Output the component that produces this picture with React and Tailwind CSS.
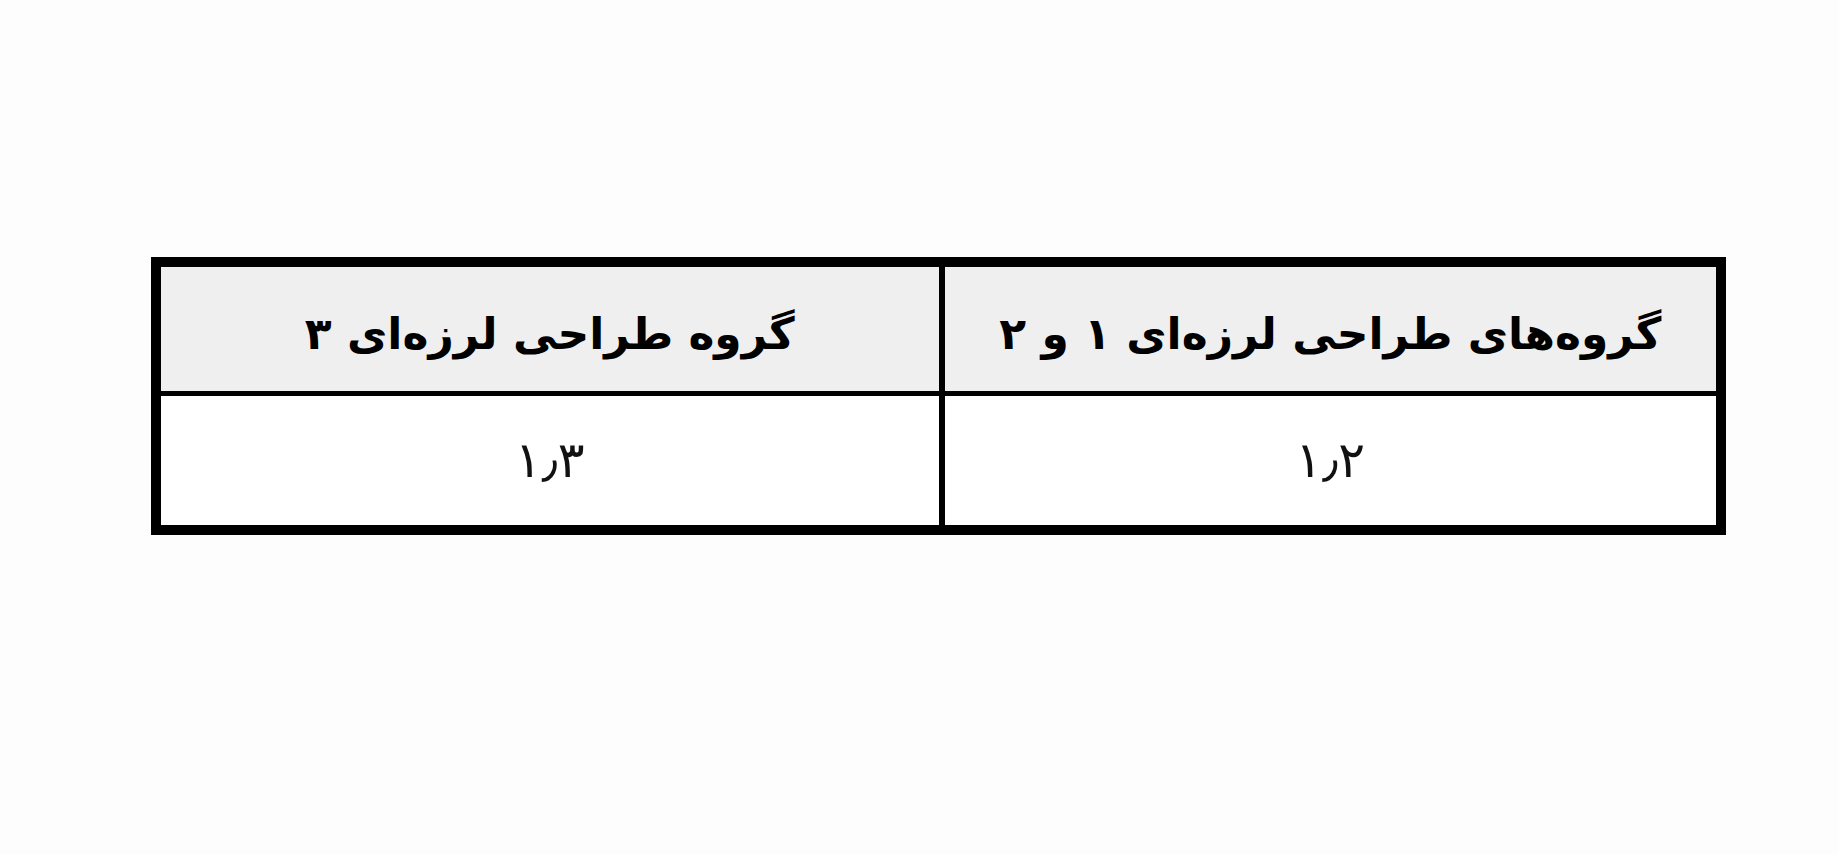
export default function App() {
  const headers = ['گروه‌های طراحی لرزه‌ای ۱ و ۲', 'گروه طراحی لرزه‌ای ۳'];
  const values = ['۱٫۲', '۱٫۳'];

  return (
    <div className="w-[1839px] h-[855px] bg-[#fdfdfd] pt-[257px] pl-[151px]" style={{ fontFamily: '"DejaVu Sans", sans-serif' }}>
      <div dir="rtl" className="w-[1575px] border-[10px] border-black bg-white">
        <div className="grid grid-cols-2 h-[129px] bg-[#efefef] border-b-[5px] border-black">
          {headers.map((h, i) => (
            <div
              key={h}
              className={
                i === 0
                  ? 'flex items-center justify-center pt-[10px] border-l-[6px] border-black text-[44px] font-bold text-black'
                  : 'flex items-center justify-center pt-[10px] text-[44px] font-bold text-black'
              }
            >
              {h}
            </div>
          ))}
        </div>
        <div className="grid grid-cols-2 h-[129px]">
          {values.map((v, i) => (
            <div
              key={v}
              className={
                i === 0
                  ? 'flex items-center justify-center border-l-[6px] border-black text-[50px] text-[#111]'
                  : 'flex items-center justify-center text-[50px] text-[#111]'
              }
            >
              {v}
            </div>
          ))}
        </div>
      </div>
    </div>
  );
}
